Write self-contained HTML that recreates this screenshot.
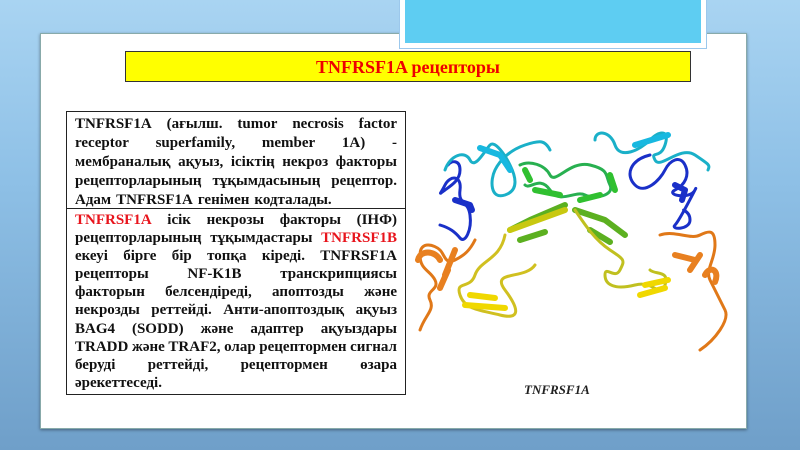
<!DOCTYPE html>
<html><head><meta charset="utf-8"><style>
body{margin:0;width:800px;height:450px;overflow:hidden;position:relative;font-family:"Liberation Serif",serif;
background:linear-gradient(180deg,#a9d4f2 0%,#8ec0e6 40%,#6f9fc9 100%);}
.panel{position:absolute;left:40px;top:33px;width:705px;height:394px;background:#fff;border:1px solid #8aa;box-shadow:0 1px 3px rgba(0,0,0,.4)}
.cyan{position:absolute;left:400px;top:-6px;width:296px;height:44px;background:#5ecdf2;border:5px solid #fff;outline:1px solid #9cc8ec}
.title{position:absolute;left:125px;top:51px;width:564px;height:29px;background:#ffff00;border:1px solid #333;text-align:center;color:#e00;font-weight:bold;font-size:18px;line-height:30px}
.box{position:absolute;left:66px;width:322px;border:1px solid #222;padding:0 8px;font-weight:bold;font-size:15px;color:#111;background:#fff}
.box div{display:flex;justify-content:space-between;white-space:nowrap}
.box div.l{justify-content:flex-start}
.box div.l span{margin-right:5px}
.b1{top:111px;height:94px;line-height:19px;padding-top:3px}
.b2{top:208px;height:183px;line-height:18.1px;padding-top:2px}
.r{color:#e8141c}
.cap{position:absolute;left:524px;top:382px;font-style:italic;font-weight:bold;font-size:13px;color:#222}
</style></head><body>
<div class="panel"></div>
<div class="cyan"></div>
<div class="title">TNFRSF1A рецепторы</div>
<div class="box b1">
<div><span>TNFRSF1A</span><span>(ағылш.</span><span>tumor</span><span>necrosis</span><span>factor</span></div>
<div><span>receptor</span><span>superfamily,</span><span>member</span><span>1A)</span><span>-</span></div>
<div><span>мембраналық</span><span>ақуыз,</span><span>ісіктің</span><span>некроз</span><span>факторы</span></div>
<div><span>рецепторларының</span><span>тұқымдасының</span><span>рецептор.</span></div>
<div class="l"><span>Адам</span><span>TNFRSF1A</span><span>генімен</span><span>кодталады.</span></div>
</div>
<div class="box b2">
<div><span class="r">TNFRSF1A</span><span>ісік</span><span>некрозы</span><span>факторы</span><span>(ІНФ)</span></div>
<div><span>рецепторларының</span><span>тұқымдастары</span><span class="r">TNFRSF1B</span></div>
<div><span>екеуі</span><span>бірге</span><span>бір</span><span>топқа</span><span>кіреді.</span><span>TNFRSF1A</span></div>
<div><span>рецепторы</span><span>NF-K1B</span><span>транскрипциясы</span></div>
<div><span>факторын</span><span>белсендіреді,</span><span>апоптозды</span><span>және</span></div>
<div><span>некрозды</span><span>реттейді.</span><span>Анти-апоптоздық</span><span>ақуыз</span></div>
<div><span>BAG4</span><span>(SODD)</span><span>және</span><span>адаптер</span><span>ақуыздары</span></div>
<div><span>TRADD</span><span>және</span><span>TRAF2,</span><span>олар</span><span>рецептормен</span><span>сигнал</span></div>
<div><span>беруді</span><span>реттейді,</span><span>рецептормен</span><span>өзара</span></div>
<div class="l"><span>әрекеттеседі.</span></div>
</div>
<svg style="position:absolute;left:410px;top:110px" width="330" height="260" viewBox="0 0 330 260" fill="none" stroke-linecap="round" stroke-linejoin="round">
<!-- left blue -->
<path d="M30 115 C40 118 45 122 50 128 S62 120 60 105 S48 95 50 80 S40 65 35 75 S28 85 35 80 S50 70 50 60 S42 50 38 55" stroke="#1a30c8" stroke-width="3"/>
<path d="M45 90 L60 95 L62 100" stroke="#1a30c8" stroke-width="6"/>
<!-- left cyan -->
<path d="M35 60 C40 45 55 40 60 50 S75 40 80 35 S95 45 100 55 S110 80 95 85 S80 70 85 60 S100 40 115 35 S135 30 140 40" stroke="#1ab0c8" stroke-width="3"/>
<path d="M70 38 L90 45 L100 60" stroke="#18b8e0" stroke-width="6"/>
<!-- right cyan/blue -->
<path d="M185 30 C185 20 200 20 205 35 S230 40 240 30 S260 20 255 35 S240 40 245 50 S270 35 285 45 S300 55 298 60" stroke="#1ab0c8" stroke-width="3"/>
<path d="M225 35 L248 28 L258 25" stroke="#18b8e0" stroke-width="6"/>
<path d="M240 45 C220 50 215 65 225 75 S250 70 255 60 S270 45 275 55 S275 75 265 80 S280 90 285 80 S270 110 265 115 S280 120 280 110 S270 100 275 100" stroke="#1a30c8" stroke-width="3"/>
<path d="M265 75 L275 80 L272 90" stroke="#1a30c8" stroke-width="6"/>
<!-- green center -->
<path d="M110 55 C120 50 135 55 140 65 S160 50 180 55 S195 65 200 75 S185 90 175 85 S150 95 140 80 S120 80 115 75" stroke="#28b050" stroke-width="3"/>
<path d="M125 80 L150 85 M170 90 L190 85 M200 65 L205 80 M115 60 L120 70" stroke="#30c030" stroke-width="6"/>
<path d="M155 95 L120 110 L100 120 M110 130 L135 122 M165 100 L195 110 L215 125 M180 120 L200 132" stroke="#5cb020" stroke-width="6"/>
<!-- yellow -->
<path d="M100 120 L155 100" stroke="#c8c810" stroke-width="6"/>
<path d="M95 125 C90 150 70 150 65 165 S45 170 50 185 S70 200 90 205 S110 200 95 180 S115 170 125 155" stroke="#d0c020" stroke-width="3"/>
<path d="M55 195 L95 198 M60 185 L85 188" stroke="#f0d800" stroke-width="6"/>
<path d="M165 100 C175 115 185 130 200 140 S215 150 210 160 S195 155 195 165 S205 180 225 175 S250 190 255 175 S245 165 240 160" stroke="#c0c020" stroke-width="3"/>
<path d="M230 185 L255 178 M235 175 L258 170" stroke="#f0d800" stroke-width="6"/>
<!-- orange -->
<path d="M10 220 C15 205 25 200 20 190 S30 180 25 170 S10 160 10 145 S25 135 30 140 S35 155 45 150 S60 140 65 130" stroke="#e07818" stroke-width="3"/>
<path d="M8 150 C10 140 25 140 30 150 M35 165 L45 140 M30 178 L38 160" stroke="#e88020" stroke-width="6"/>
<path d="M250 125 C265 120 280 130 290 125 S305 120 305 135 S295 160 300 170 S310 190 315 200 S305 230 290 240" stroke="#e07818" stroke-width="3"/>
<path d="M265 145 L285 150 M280 160 L290 145 M295 165 C300 155 310 160 305 172" stroke="#e88020" stroke-width="6"/>
</svg>
<div class="cap">TNFRSF1A</div>
</body></html>
